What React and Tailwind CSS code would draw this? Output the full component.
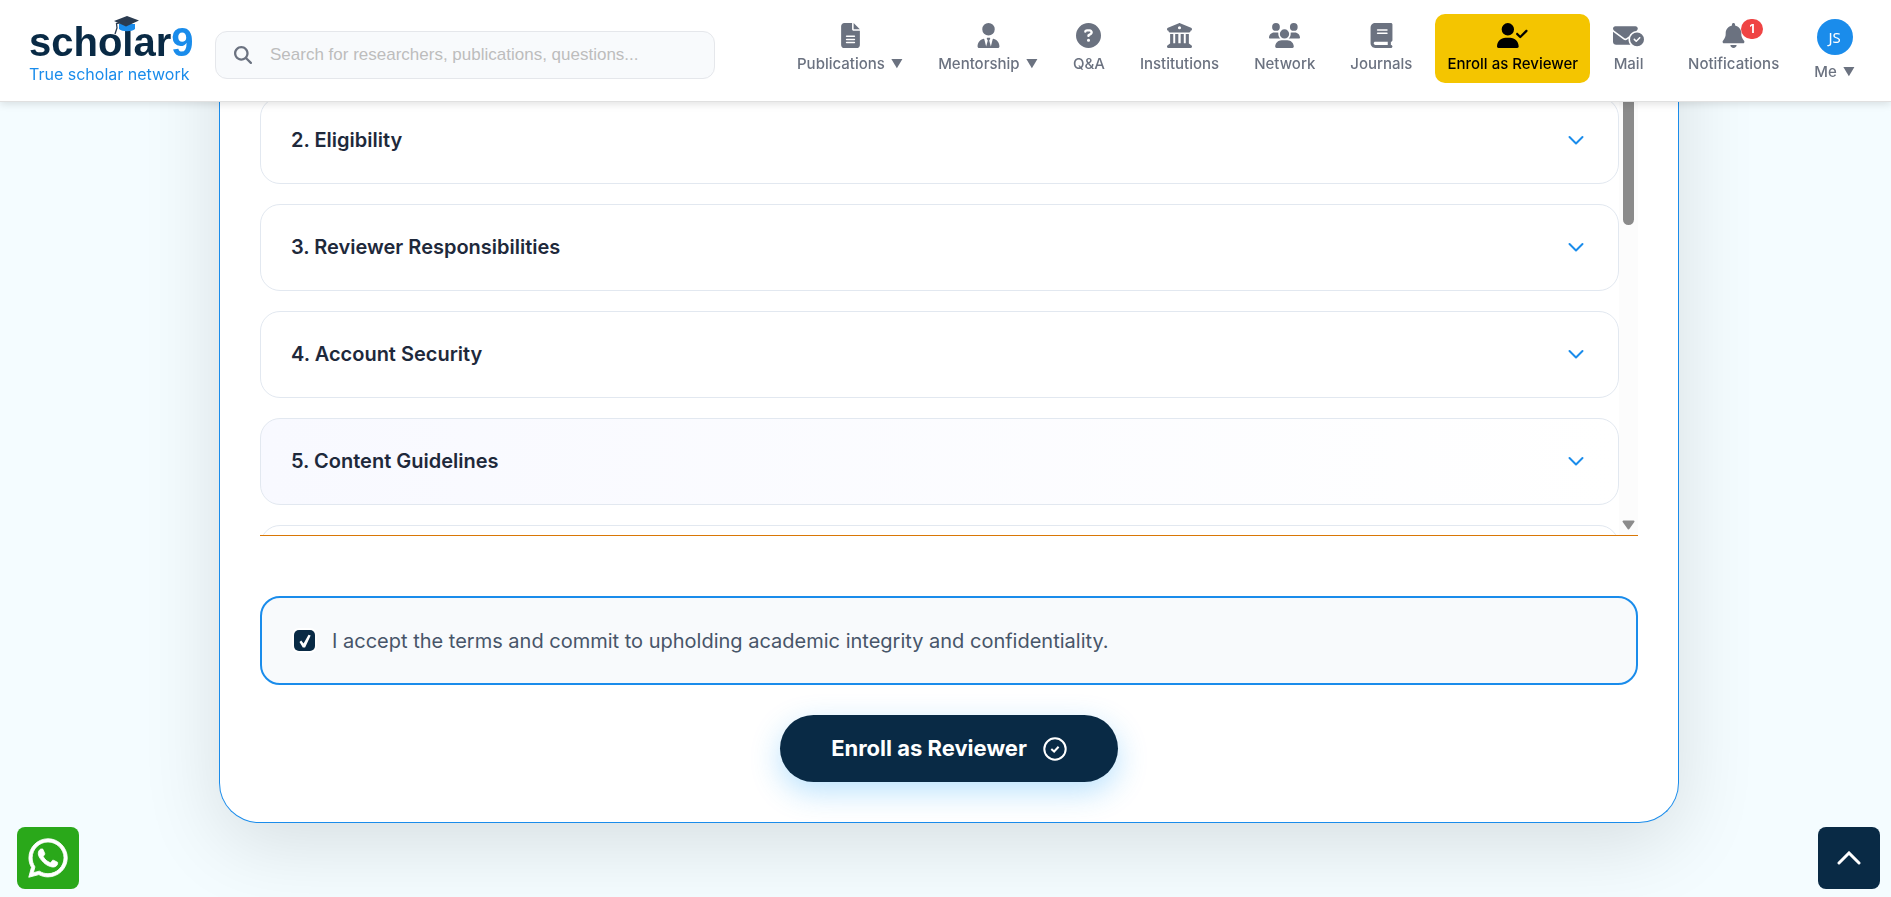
import {useState} from "react";
import {
    FaBell,
    FaBook,
    FaBuildingColumns,
    FaCircleQuestion,
    FaEnvelopeCircleCheck,
    FaFileLines,
    FaMagnifyingGlass,
    FaUserCheck,
    FaUsers,
    FaUserTie,
    FaWhatsapp,
} from "react-icons/fa6";

const navItems = [
    {label: "Publications", icon: FaFileLines, menu: true},
    {label: "Mentorship", icon: FaUserTie, menu: true},
    {label: "Q&A", icon: FaCircleQuestion},
    {label: "Institutions", icon: FaBuildingColumns},
    {label: "Network", icon: FaUsers, wide: true},
    {label: "Journals", icon: FaBook},
    {label: "Enroll as Reviewer", icon: FaUserCheck, wide: true, active: true},
    {label: "Mail", icon: FaEnvelopeCircleCheck, wide: true, spaced: true},
    {label: "Notifications", icon: FaBell, badge: 1},
];

const terms = [
    {id: 2, title: "2. Eligibility"},
    {id: 3, title: "3. Reviewer Responsibilities"},
    {id: 4, title: "4. Account Security"},
    {id: 5, title: "5. Content Guidelines", highlighted: true},
    {id: 6, title: ""},
];

function Logo() {
    return <a href="#" className="relative flex w-[163px] shrink-0 flex-col">
        <span
            className="font-['Liberation_Sans',Arial,sans-serif] text-[40px] leading-[44px] font-bold text-[#092a45]">
            scholar<span className="text-[#1a8ceb]">9</span>
        </span>
        <span className="text-base leading-5 whitespace-nowrap text-[#1a8ceb]">True scholar network</span>
        <svg viewBox="0 0 27 19" className="absolute -top-1 left-[84px] h-[19px] w-[27px]" aria-hidden="true">
            <path d="M6 8v5c3 3 13 3 16 0V8z" fill="#1a8ceb"/>
            <path d="M1 5 14 0l12 4.500-13 6z" fill="#2a3b50"/>
            <path d="M14 5 3.500 7.500 4 12l-2 6" fill="none" stroke="#2a3b50" strokeWidth="1.300"/>
        </svg>
    </a>
}

function NavLabel({children, menu}) {
    return <span className="flex items-center gap-[6px] text-[15px] leading-[22px] font-medium whitespace-nowrap">
        {children}
        {menu && <span className="text-xs leading-[22px]">▼</span>}
    </span>
}

function NavItem({item}) {
    const Icon = item.icon;
    return <a href="#"
              className={`flex flex-col items-center gap-[5px] rounded-[10px] px-3 pt-[9px] pb-2 ${item.active ? "bg-[#f4c500] text-black" : "text-[#6b7280]"} ${item.spaced ? "mr-[9px]" : ""}`}>
        <span className="relative">
            <Icon className={item.wide ? "h-[25px] w-[31px]" : "h-[25px] w-[25px]"}/>
            {item.badge &&
                <span
                    className="absolute -top-1 left-5 flex h-5 w-[22px] items-center justify-center rounded-full bg-[#ef4444] text-xs font-bold text-white">
                    {item.badge}
                </span>
            }
        </span>
        <NavLabel menu={item.menu}>{item.label}</NavLabel>
    </a>
}

function Header() {
    return <header
        className="fixed inset-x-0 top-0 z-10 flex h-[102px] items-start justify-between border-b border-[#e0e0e0] bg-white pr-6 pl-[29px] shadow-[0_2px_8px_rgba(0,0,0,0.12)]">
        <div className="flex items-start gap-[23px]">
            <div className="pt-5"><Logo/></div>
            <label
                className="mt-[31px] flex h-12 w-[500px] items-center gap-[18px] rounded-xl border border-[#e5e7eb] bg-[#f8fafc] px-[18px] text-[#6b7280]">
                <FaMagnifyingGlass size={18} className="shrink-0"/>
                <input type="search" aria-label="Search"
                       placeholder="Search for researchers, publications, questions..."
                       className="w-full bg-transparent font-['Liberation_Sans',Arial,sans-serif] text-[17px] outline-none placeholder:text-[#bdbdbd]"/>
            </label>
        </div>
        <nav className="flex items-start gap-[11px] pt-[14px]">
            {navItems.map((item) => <NavItem key={item.label} item={item}/>)}
            <button type="button" className="flex flex-col items-center gap-[6px] px-3 pt-[5px] text-[#6b7280]">
                <span
                    className="flex h-9 w-9 items-center justify-center rounded-full bg-[#1a8ceb] font-['Noto_Sans',sans-serif] text-[15px] text-white">
                    JS
                </span>
                <NavLabel menu>Me</NavLabel>
            </button>
        </nav>
    </header>
}

function Term({term}) {
    return <button type="button"
                   className={`flex h-[87px] shrink-0 items-center justify-between rounded-[20px] border border-[#e2e8f0] px-[30px] pb-0.5 text-left text-xl font-semibold text-[#1e293b] ${term.highlighted ? "bg-linear-to-r from-[#f8f9ff] to-white" : "bg-white"}`}>
        <span>{term.title}</span>
        <svg viewBox="0 0 24 24" className="h-6 w-6" fill="none" stroke="#1a8ceb" strokeWidth="2"
             strokeLinecap="round" strokeLinejoin="round" aria-hidden="true">
            <path d="m5.500 9 6.500 6.500L18.500 9"/>
        </svg>
    </button>
}

function TermsList() {
    return <div className="flex h-[439px] border-b border-[#d97706]">
        <div className="flex flex-1 flex-col gap-5 overflow-y-auto [scrollbar-width:none]">
            {terms.map((term) => <Term key={term.id} term={term}/>)}
        </div>
        <div className="flex w-[19px] flex-col items-center justify-between bg-[#fcfcfc] pb-[5px]">
            <div className="h-32 w-[11px] rounded-b-full bg-[#8b8b8b]"/>
            <svg viewBox="0 0 13 10" className="h-[10px] w-[13px]" aria-hidden="true">
                <path d="M1.500 1.500h10L6.500 8.500z" fill="#8b8b8b" stroke="#8b8b8b" strokeWidth="2"
                      strokeLinejoin="round"/>
            </svg>
        </div>
    </div>
}

export default function App() {
    const [accepted, setAccepted] = useState(true);

    return <div className="min-h-screen overflow-hidden bg-[#f4fcff] font-[Inter,sans-serif]">
        <Header/>
        <main className="pb-[74px] pl-[7px]">
            <section
                className="mx-auto max-w-[1460px] rounded-b-[40px] border border-t-0 border-[#1a8ceb] bg-white px-10 pt-[97px] pb-10 shadow-[0_20px_80px_rgba(0,0,0,0.12)]">
                <TermsList/>
                <label
                    className="mt-[60px] flex h-[89px] items-center gap-[17px] rounded-[20px] border-2 border-[#1a8ceb] bg-[#f8fafc] px-8 text-xl text-[#475569]">
                    <span className="relative flex h-[21px] w-[21px] items-center justify-center">
                        <input type="checkbox" checked={accepted} onChange={(e) => setAccepted(e.target.checked)}
                               className="h-[21px] w-[21px] appearance-none rounded-[5px] bg-white ring-2 ring-white checked:bg-[#092a45]"/>
                        {accepted &&
                            <svg viewBox="0 0 12 14" className="pointer-events-none absolute h-[14px] w-3"
                                 aria-hidden="true">
                                <path d="M.5 8 2.200 6.600 4.600 9.600 9.500.8l2.200.6-5.600 12H3.800z" fill="white"/>
                            </svg>
                        }
                    </span>
                    I accept the terms and commit to upholding academic integrity and confidentiality.
                </label>
                <div className="mt-[30px] flex justify-center">
                    <button type="button"
                            className="flex h-[67px] items-center gap-4 rounded-full bg-[#092a45] px-[51px] text-[22px] font-bold text-white shadow-[0_10px_30px_rgba(26,160,250,0.3)]">
                        Enroll as Reviewer
                        <svg viewBox="0 0 24 24" className="h-6 w-6" fill="none" stroke="white" strokeWidth="2"
                             aria-hidden="true">
                            <circle cx="12" cy="12" r="10.700"/>
                            <path d="m8.300 12 2.800 2.500 4.500-4.800"/>
                        </svg>
                    </button>
                </div>
            </section>
        </main>
        <a href="#" aria-label="WhatsApp"
           className="fixed bottom-2 left-[17px] flex h-[62px] w-[62px] items-center justify-center rounded-lg bg-[#2aa81a] text-white">
            <FaWhatsapp size={44} stroke="white" strokeWidth={10}/>
        </a>
        <button type="button" aria-label="Back to top"
                className="fixed right-[11px] bottom-2 flex h-[62px] w-[62px] items-center justify-center rounded-lg bg-[#092a45]">
            <svg viewBox="0 0 24 14" className="h-[14px] w-6" fill="none" stroke="white" strokeWidth="3"
                 strokeLinecap="round" aria-hidden="true">
                <path d="M2 12 12 2l10 10"/>
            </svg>
        </button>
    </div>
}
